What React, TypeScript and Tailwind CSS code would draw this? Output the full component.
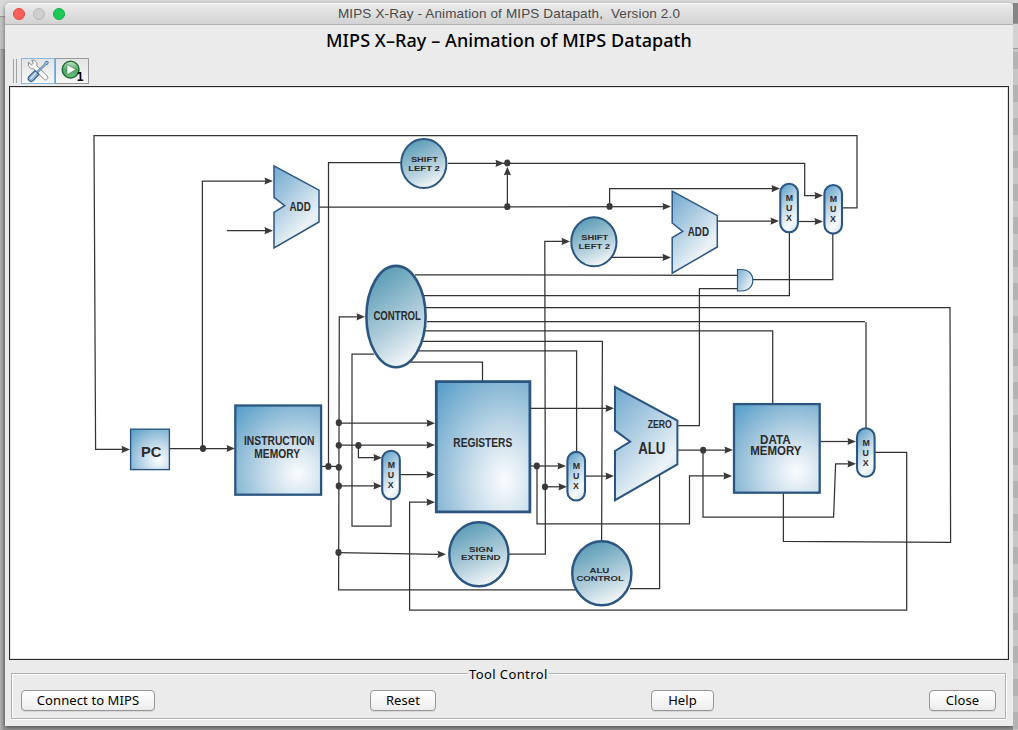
import React from "react";

const WIRES = [
  "M842 207.8H857V135.6H94L95.6 449.4H124",
  "M170 448.5H230",
  "M202.4 448.5V181H266",
  "M227 230.7H266",
  "M319 207H507L664 206.5",
  "M507.4 207V172",
  "M448 163.3H804.7V195.6H817",
  "M609.6 206.5V188.6H773",
  "M322 466.4H339",
  "M328.5 466V162.5H401",
  "M359 316.8H339.3L338.6 589.9H577",
  "M717 221.1H773",
  "M612 257.4H665",
  "M508 554.1H545.4L544.8 241.4H564",
  "M799 221.5H817",
  "M789.4 232V295.7H424",
  "M832.8 233V279.5H752",
  "M415 274.8L737 275.3",
  "M738 288.6H699.4V425.7H677",
  "M426 307.6H950L950.6 542.4L783.4 541.4V493",
  "M427 321.5H865M866 322V428",
  "M425 330.8H772.7V404",
  "M422 341.4H602.4L601.6 541",
  "M419 350.8H576.6V452",
  "M410 362H482.5V381",
  "M374 354H352L352 526.2H391V499",
  "M339 423.2H429",
  "M339 445H429",
  "M358.4 445V457.7H375",
  "M339 485.9H375",
  "M400 474.6H429",
  "M875 452.4H906.7V610H409.6V502.2H429",
  "M338.6 552.6L438 554.3",
  "M530 408.3H607",
  "M530 466H560",
  "M537 466V523.8H689.5V475.9H725",
  "M545 486.8H560",
  "M585 476.1H607",
  "M677 450H726",
  "M703 450V517H833.6L835.6 463.8H850",
  "M820 441.5H850",
  "M659.6 474V588.6H630",
];

const ARROWS: [number, number][] = [
  [130, 449.4], [235, 448.5], [273, 181], [273, 230.7], [671, 206.5], [504, 163.3],
  [823, 195.6], [780, 188.6], [365, 316.8], [779, 221.1], [671, 257.4], [570, 241.4],
  [823, 221.5], [435, 423.2], [435, 445], [382, 457.7], [382, 485.9], [435, 474.6],
  [435, 502.2], [446, 554.3], [614, 408.3], [566, 466], [732, 475.9], [567, 486.8],
  [614, 476.1], [733, 450], [856, 463.8], [856, 441.5],
];

const DOTS: [number, number][] = [
  [203, 448.5], [507.3, 163], [507.3, 206.7], [609.6, 206.4], [328.4, 466.4], [338.8, 467.3],
  [338.8, 422.7], [338.8, 445.3], [358.4, 445.5], [338.8, 486], [338.5, 552.5],
  [536.8, 466], [545, 486.8], [703.2, 450.2],
];

const CIRCLES = [
  [423.8, 163.5, 22.6, 24.5, 2], [593.9, 241.8, 22.6, 24.5, 2], [396, 316.6, 29.6, 50.7, 2.6],
  [478.9, 554.2, 29.6, 32, 2.4], [601.8, 573.2, 29.6, 32, 2.4],
];

const BOXES = [
  [130.6, 429.2, 38.8, 40.4, 1.4], [235.3, 405.5, 85.8, 89.2, 2.3],
  [436.3, 381.6, 93.6, 130.3, 2.8], [734, 404.1, 85.7, 88.6, 2.3],
];

const MUXES = [[789.1, 182.7], [833.2, 184], [391, 449.7], [576.2, 450.9], [865.8, 427.2]];

// text, left, baseline, width, size
const LABELS: [string, number, number, number, number][] = [
  ["PC", 141, 457.1, 20.4, 15], ["INSTRUCTION", 244, 445, 70.4, 12], ["MEMORY", 254.3, 458.2, 45.7, 12],
  ["REGISTERS", 453.3, 447.3, 59, 12], ["CONTROL", 373.4, 320.3, 47.6, 12],
  ["SHIFT", 410.9, 162, 27, 7.7], ["LEFT 2", 408.3, 170.6, 31.5, 7.7],
  ["SHIFT", 581.2, 240.4, 27, 7.7], ["LEFT 2", 578.6, 249, 31.5, 7.7],
  ["SIGN", 469.1, 551.9, 23.9, 7.7], ["EXTEND", 461.1, 560.4, 39.4, 7.7],
  ["ALU", 589.4, 572.6, 20, 7.7], ["CONTROL", 576.4, 581, 47.5, 7.7],
  ["ADD", 289.5, 210.9, 21.2, 12], ["ADD", 687.8, 235.9, 21.2, 12],
  ["ALU", 638.2, 453.7, 27.2, 16],
  ["DATA", 760, 443.7, 30.6, 12], ["MEMORY", 750.3, 454.7, 51.2, 12],
];

function Datapath() {
  return (
    <svg className="block h-full w-full" viewBox="10 87 998 572" fontFamily="'Liberation Sans', Arial, sans-serif">
      <defs>
        <radialGradient id="box" cx="0.73" cy="0.76" r="1" fx="0.73" fy="0.76">
          <stop offset="0" stopColor="#fbfdfe" />
          <stop offset="0.35" stopColor="#cadeeb" />
          <stop offset="0.7" stopColor="#8fbcd7" />
          <stop offset="1" stopColor="#5aa0ca" />
        </radialGradient>
        <linearGradient id="round" x1="0.34" y1="0" x2="0.74" y2="0.96">
          <stop offset="0" stopColor="#5c9cb7" />
          <stop offset="0.2" stopColor="#76acc2" />
          <stop offset="0.6" stopColor="#b3cfdc" />
          <stop offset="1" stopColor="#f6f9fb" />
        </linearGradient>
        <linearGradient id="trap" x1="0" y1="0" x2="0.6" y2="1">
          <stop offset="0" stopColor="#6fa9cf" />
          <stop offset="0.4" stopColor="#a9cae0" />
          <stop offset="0.85" stopColor="#ecf3f8" />
          <stop offset="1" stopColor="#d0e2ee" />
        </linearGradient>
        <linearGradient id="mux" x1="0.3" y1="0" x2="0.7" y2="1">
          <stop offset="0" stopColor="#68a5cb" />
          <stop offset="0.4" stopColor="#bad5e6" />
          <stop offset="0.8" stopColor="#f6fafc" />
          <stop offset="1" stopColor="#d8e7f0" />
        </linearGradient>
        <linearGradient id="gate" x1="0" y1="0" x2="1" y2="0.7">
          <stop offset="0" stopColor="#79afd0" />
          <stop offset="1" stopColor="#f0f6fa" />
        </linearGradient>
      </defs>

      <g fill="none" stroke="#353233" strokeWidth="1.25">
        {WIRES.map((d) => <path key={d} d={d} />)}
      </g>
      <g fill="#3b393a">
        {ARROWS.map(([x, y]) => <path key={`${x}-${y}`} d={`M${x} ${y}l-8.5 -3.6l0.8 3.6l-0.8 3.6z`} />)}
        <path d="M507.4 166.8l-3.6 8.5l3.6 -0.8l3.6 0.8z" />
        {DOTS.map(([x, y]) => <ellipse key={`${x}-${y}`} cx={x} cy={y} rx="3.1" ry="3.4" />)}
      </g>

      <g stroke="#2c5682">
        {CIRCLES.map(([cx, cy, rx, ry, w]) => (
          <ellipse key={`${cx}`} cx={cx} cy={cy} rx={rx} ry={ry} strokeWidth={w} fill="url(#round)" />
        ))}
        {BOXES.map(([x, y, w, h, s]) => (
          <rect key={`${x}`} x={x} y={y} width={w} height={h} strokeWidth={s} fill="url(#box)" />
        ))}
        <g fill="url(#trap)" strokeWidth="1.5">
          <path d="M274 165.8L319 190.2V222L274 248V212.3L284.7 205.7L274 197.4Z" />
          <path d="M672.2 191.2L717.3 215.7V247L672.2 273.2V237.7L682.7 231.3L672.2 223Z" />
          <path strokeWidth="2" d="M615 387L677.4 420.5V464.3L615 500.2V451L630.2 441.6L615 430.4Z" />
        </g>
        {MUXES.map(([cx, y]) => (
          <rect key={`${cx}`} x={cx - 8.8} y={y + 1} width="17.6" height="48.6" rx="8.8" strokeWidth="2.1" fill="url(#mux)" />
        ))}
        <path d="M737.5 269.5H741C748.5 269.5 752.8 274 752.8 280.2S748.5 291 741 291H737.5Z" strokeWidth="1.2" fill="url(#gate)" />
      </g>

      <g fill="#2b2a2c" fontWeight="bold">
        {LABELS.map(([t, x, y, w, s]) => (
          <text key={`${x}-${y}`} x={x} y={y} fontSize={s} textLength={w} lengthAdjust="spacingAndGlyphs">{t}</text>
        ))}
        <text x="647.7" y="427.7" fontSize="10.6" textLength="24.2" lengthAdjust="spacingAndGlyphs">ZERO</text>
        {MUXES.map(([cx, y]) => (
          <g key={`${cx}-t`} fontSize="8.8" textAnchor="middle">
            <text x={cx + 0.3} y={y + 18.4}>M</text>
            <text x={cx} y={y + 28.4}>U</text>
            <text x={cx - 0.2} y={y + 38.3}>X</text>
          </g>
        ))}
      </g>
    </svg>
  );
}

function ToolsIcon() {
  return (
    <svg className="h-6 w-6" viewBox="0 0 24 24" fill="none" strokeLinecap="round" strokeLinejoin="round">
      <path d="M2.4 3.6L5.4 5.8L7.4 4.2L5.8 1.2C9.4 0.6 11.6 3.4 10.8 6.6L21.2 17C23.2 19.4 20.2 22.4 17.8 20.2L7.6 9.8C4.2 10.4 1.6 7.4 2.4 3.6Z" fill="#f7f7f7" stroke="#8a8a8a" strokeWidth="1" />
      <path d="M11.2 12L18.8 4.8L19.2 3L21.4 2.2L22.4 3.2L21.4 5.4L19.8 5.8L12.4 13.2Z" fill="#a8c8e4" stroke="#4777a5" strokeWidth="1" />
      <path d="M9 11.6L13 15.4L7.2 21.6C4.4 24 0.6 20.6 3 17.4Z" fill="#8fb0d0" stroke="#2f5c8a" strokeWidth="1.2" />
      <path d="M4.8 19.4L9.8 14" stroke="#d3e2f0" strokeWidth="1.5" />
    </svg>
  );
}

function StepIcon() {
  return (
    <svg className="h-6 w-6" viewBox="0 0 24 24" fontFamily="'DejaVu Sans Mono', monospace">
      <defs>
        <linearGradient id="play" x1="0" y1="0" x2="0" y2="1">
          <stop offset="0" stopColor="#cfe9d4" />
          <stop offset="0.5" stopColor="#4fa565" />
          <stop offset="1" stopColor="#6fc07f" />
        </linearGradient>
      </defs>
      <circle cx="10.6" cy="10.6" r="8.4" fill="url(#play)" stroke="#1f7037" strokeWidth="1.5" />
      <path d="M7 5.4L15.8 10.6L7 15.8Z" fill="#fff" stroke="#3c8b52" strokeWidth="0.6" />
      <text x="16.6" y="22.4" fontSize="12" fontWeight="bold">1</text>
    </svg>
  );
}

function PushButton({ children, className }: { children: React.ReactNode; className: string }) {
  return (
    <button className={`flex h-[21px] items-center justify-center rounded-[4px] border border-[#969696] bg-gradient-to-b from-white via-[#f7f7f7] to-[#ececec] text-[13px] leading-none tracking-[0.1px] whitespace-nowrap text-black shadow-[0_1px_0_#d8d8d8] ${className}`}>
      {children}
    </button>
  );
}

export default function App() {
  return (
    <div className="flex h-[730px] w-[1018px] overflow-hidden bg-gradient-to-b from-[#d9d9d9] via-[#b5b5b5] to-[#a0a0a0] pt-[3px] font-['Noto_Sans','Open_Sans',sans-serif] text-black">
      <div className="h-full w-[5px] shrink-0 bg-gradient-to-r from-[#b4b4b4] to-[#929292]">
        <div className="h-[13px] bg-[#d9d9d9]" />
        <div className="h-[34px] border-y border-[#9a9a9a] bg-[#c4c4c4]" />
      </div>
      <div className="flex h-[723px] w-[1008px] shrink-0 flex-col rounded-t-[5px] bg-[#ebebeb] shadow-[0_2px_5px_rgba(0,0,0,0.5)]">
        <header className="flex h-[22px] shrink-0 items-center rounded-t-[5px] border-t border-b border-t-[#f8f8f8] border-b-[#b1b1b1] bg-gradient-to-b from-[#eaeaea] to-[#d3d3d3] px-2">
          <div className="flex w-[200px] gap-2">
            <span className="h-3 w-3 rounded-full border border-[#e2463f] bg-[#fc605b]" />
            <span className="h-3 w-3 rounded-full border border-[#b9b9b9] bg-[#cecece]" />
            <span className="h-3 w-3 rounded-full border border-[#14ae46] bg-[#1cc956]" />
          </div>
          <div className="flex-1 text-center font-['Liberation_Sans',Arial,sans-serif] text-[13.5px] leading-none tracking-[0.14px] whitespace-pre text-[#4a4a4a]">
            MIPS X-Ray - Animation of MIPS Datapath,  Version 2.0
          </div>
          <div className="w-[200px]" />
        </header>

        <h1 className="h-[33px] shrink-0 pt-[3px] text-center text-[18px] leading-[24px] font-medium tracking-[0.08px] whitespace-nowrap">
          MIPS X–Ray – Animation of MIPS Datapath
        </h1>

        <div className="flex h-[28px] shrink-0 pl-2">
          <div className="mt-px mr-1 h-6 w-1 border-x border-[#a2a2a2]" />
          <div className="flex h-[26px] w-[34px] items-center justify-center border border-[#86b9e0] bg-gradient-to-b from-[#e4e4e4] to-[#f8f8f8]">
            <ToolsIcon />
          </div>
          <div className="flex h-[26px] w-[34px] items-center justify-center border border-[#999] bg-gradient-to-b from-[#e4e4e4] to-[#f8f8f8]">
            <StepIcon />
          </div>
        </div>

        <main className="ml-1 h-[574px] w-[1000px] shrink-0 border border-[#2a2a2a] bg-white shadow-[inset_0_0_0_1px_#e2e2e2]">
          <Datapath />
        </main>

        <section className="mt-[6px] flex w-full flex-col">
          <div className="relative mr-[7px] ml-[6px] mt-[7px] flex h-[46px] items-start justify-between border border-[#b1b1b1] px-[9px] pt-4 shadow-[1px_1px_0_#fff,inset_1px_1px_0_#fff]">
            <span className="absolute -top-[8px] left-[456px] bg-[#ebebeb] px-px text-[13px] leading-[17px] tracking-[0.4px] whitespace-nowrap">Tool Control</span>
            <PushButton className="w-[134px]">Connect to MIPS</PushButton>
            <PushButton className="w-[66px]">Reset</PushButton>
            <PushButton className="w-[63px]">Help</PushButton>
            <PushButton className="w-[67px]">Close</PushButton>
          </div>
        </section>
      </div>
      <div className="h-full w-[5px] shrink-0 bg-[repeating-linear-gradient(to_bottom,#c6c6c6_0_16px,#b3b3b3_16px_33px)]">
        <div className="h-5 bg-[#858585]" />
        <div className="h-[26px] border-y border-[#999] bg-[#d2d2d2]" />
      </div>
    </div>
  );
}
